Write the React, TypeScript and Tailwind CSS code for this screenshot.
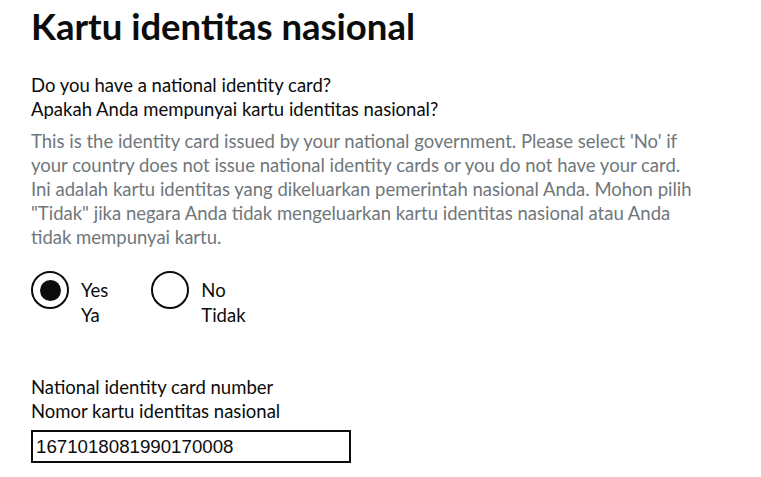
export default function App() {
  return (
    <div className="min-h-screen bg-white px-[31px] pt-[6px] text-[#0b0c0c] font-['Lato','Liberation_Sans',sans-serif]">
      {/* HEADER */}
      <h1 className="text-[36.5px] font-bold leading-[40px] mb-[27px]">
        Kartu identitas nasional
      </h1>

      {/* PERTANYAAN */}
      <div className="text-[18.5px] leading-[24px]">
        <p>Do you have a national identity card?</p>
        <p>Apakah Anda mempunyai kartu identitas nasional?</p>
      </div>

      <div className="text-[18.5px] leading-[24px] text-[#6f777b] mt-[8px] whitespace-nowrap">
        <p>
          This is the identity card issued by your national government. Please select 'No' if
          <br />
          your country does not issue national identity cards or you do not have your card.
        </p>
        <p>
          Ini adalah kartu identitas yang dikeluarkan pemerintah nasional Anda. Mohon pilih
          <br />
          "Tidak" jika negara Anda tidak mengeluarkan kartu identitas nasional atau Anda
          <br />
          tidak mempunyai kartu.
        </p>
      </div>

      {/* RADIO */}
      <div className="flex gap-[43px] mt-[22px]">
        <label className="flex items-start gap-[12px]">
          <span className="w-[38px] h-[38px] rounded-full border-2 border-[#0b0c0c] flex items-center justify-center">
            <span className="w-[21px] h-[21px] rounded-full bg-[#0b0c0c]" />
          </span>
          <span className="text-[18.5px] leading-[25px] pt-[7px]">
            Yes
            <br />
            Ya
          </span>
        </label>
        <label className="flex items-start gap-[12px]">
          <span className="w-[38px] h-[38px] rounded-full border-2 border-[#0b0c0c]" />
          <span className="text-[18.5px] leading-[25px] pt-[7px]">
            No
            <br />
            Tidak
          </span>
        </label>
      </div>

      {/* NOMOR */}
      <div className="text-[18.5px] leading-[24px] mt-[47px]">
        <p>National identity card number</p>
        <p>Nomor kartu identitas nasional</p>
      </div>
      <input
        readOnly
        value="1671018081990170008"
        className="mt-[7px] w-[320px] h-[33px] border-2 border-[#0b0c0c] px-[3px] text-[18.7px] text-[#0b0c0c] font-['Liberation_Sans',Arial,sans-serif] outline-none"
      />
    </div>
  )
}
